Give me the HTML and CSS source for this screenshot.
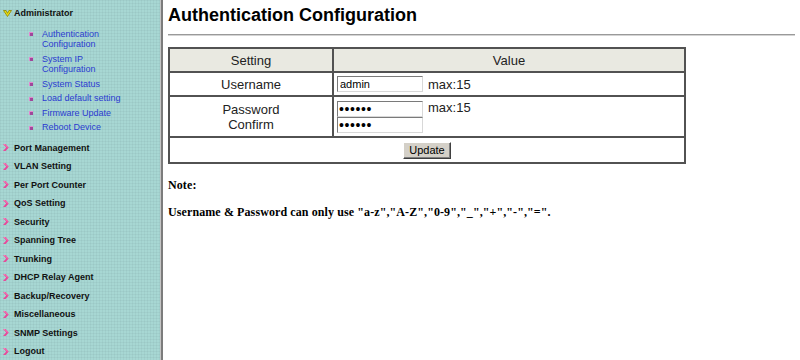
FILE: index.html
```html
<!DOCTYPE html>
<html>
<head>
<meta charset="utf-8">
<title>Authentication Configuration</title>
<link rel="stylesheet" href="styles.css">
</head>
<body>
<div class="layout">
  <nav class="sidebar">
    <div class="main-item open">
      <svg class="ico-open" width="9" height="7" viewBox="0 0 9 7"><path d="M0.5 0.5h2.6l1.4 2.8 1.4-2.8h2.6l-4 6z" fill="#ecdf10" stroke="#8c8400" stroke-width="0.8" stroke-linejoin="round"/></svg>
      <span>Administrator</span>
    </div>
    <ul class="sub">
      <li><span class="bullet"></span><span class="link">Authentication<br>Configuration</span></li>
      <li><span class="bullet"></span><span class="link">System IP<br>Configuration</span></li>
      <li><span class="bullet"></span><span class="link">System Status</span></li>
      <li><span class="bullet"></span><span class="link">Load default setting</span></li>
      <li><span class="bullet"></span><span class="link">Firmware Update</span></li>
      <li><span class="bullet"></span><span class="link">Reboot Device</span></li>
    </ul>
    <div class="main-item"><svg class="ico-arrow" width="6" height="7" viewBox="0 0 6 7"><path d="M0 0h2.6l3.2 3.5-3.2 3.5H0l3.2-3.5z" fill="#e8489a"/><path d="M0.6 0.6h1.6l2.6 2.9" fill="none" stroke="#ff9cc8" stroke-width="0.7"/></svg><span>Port Management</span></div>
    <div class="main-item"><svg class="ico-arrow" width="6" height="7" viewBox="0 0 6 7"><path d="M0 0h2.6l3.2 3.5-3.2 3.5H0l3.2-3.5z" fill="#e8489a"/><path d="M0.6 0.6h1.6l2.6 2.9" fill="none" stroke="#ff9cc8" stroke-width="0.7"/></svg><span>VLAN Setting</span></div>
    <div class="main-item"><svg class="ico-arrow" width="6" height="7" viewBox="0 0 6 7"><path d="M0 0h2.6l3.2 3.5-3.2 3.5H0l3.2-3.5z" fill="#e8489a"/><path d="M0.6 0.6h1.6l2.6 2.9" fill="none" stroke="#ff9cc8" stroke-width="0.7"/></svg><span>Per Port Counter</span></div>
    <div class="main-item"><svg class="ico-arrow" width="6" height="7" viewBox="0 0 6 7"><path d="M0 0h2.6l3.2 3.5-3.2 3.5H0l3.2-3.5z" fill="#e8489a"/><path d="M0.6 0.6h1.6l2.6 2.9" fill="none" stroke="#ff9cc8" stroke-width="0.7"/></svg><span>QoS Setting</span></div>
    <div class="main-item"><svg class="ico-arrow" width="6" height="7" viewBox="0 0 6 7"><path d="M0 0h2.6l3.2 3.5-3.2 3.5H0l3.2-3.5z" fill="#e8489a"/><path d="M0.6 0.6h1.6l2.6 2.9" fill="none" stroke="#ff9cc8" stroke-width="0.7"/></svg><span>Security</span></div>
    <div class="main-item"><svg class="ico-arrow" width="6" height="7" viewBox="0 0 6 7"><path d="M0 0h2.6l3.2 3.5-3.2 3.5H0l3.2-3.5z" fill="#e8489a"/><path d="M0.6 0.6h1.6l2.6 2.9" fill="none" stroke="#ff9cc8" stroke-width="0.7"/></svg><span>Spanning Tree</span></div>
    <div class="main-item"><svg class="ico-arrow" width="6" height="7" viewBox="0 0 6 7"><path d="M0 0h2.6l3.2 3.5-3.2 3.5H0l3.2-3.5z" fill="#e8489a"/><path d="M0.6 0.6h1.6l2.6 2.9" fill="none" stroke="#ff9cc8" stroke-width="0.7"/></svg><span>Trunking</span></div>
    <div class="main-item"><svg class="ico-arrow" width="6" height="7" viewBox="0 0 6 7"><path d="M0 0h2.6l3.2 3.5-3.2 3.5H0l3.2-3.5z" fill="#e8489a"/><path d="M0.6 0.6h1.6l2.6 2.9" fill="none" stroke="#ff9cc8" stroke-width="0.7"/></svg><span>DHCP Relay Agent</span></div>
    <div class="main-item"><svg class="ico-arrow" width="6" height="7" viewBox="0 0 6 7"><path d="M0 0h2.6l3.2 3.5-3.2 3.5H0l3.2-3.5z" fill="#e8489a"/><path d="M0.6 0.6h1.6l2.6 2.9" fill="none" stroke="#ff9cc8" stroke-width="0.7"/></svg><span>Backup/Recovery</span></div>
    <div class="main-item"><svg class="ico-arrow" width="6" height="7" viewBox="0 0 6 7"><path d="M0 0h2.6l3.2 3.5-3.2 3.5H0l3.2-3.5z" fill="#e8489a"/><path d="M0.6 0.6h1.6l2.6 2.9" fill="none" stroke="#ff9cc8" stroke-width="0.7"/></svg><span>Miscellaneous</span></div>
    <div class="main-item"><svg class="ico-arrow" width="6" height="7" viewBox="0 0 6 7"><path d="M0 0h2.6l3.2 3.5-3.2 3.5H0l3.2-3.5z" fill="#e8489a"/><path d="M0.6 0.6h1.6l2.6 2.9" fill="none" stroke="#ff9cc8" stroke-width="0.7"/></svg><span>SNMP Settings</span></div>
    <div class="main-item"><svg class="ico-arrow" width="6" height="7" viewBox="0 0 6 7"><path d="M0 0h2.6l3.2 3.5-3.2 3.5H0l3.2-3.5z" fill="#e8489a"/><path d="M0.6 0.6h1.6l2.6 2.9" fill="none" stroke="#ff9cc8" stroke-width="0.7"/></svg><span>Logout</span></div>
  </nav>
  <main class="content">
    <h1 class="title">Authentication Configuration</h1>
    <hr class="rule">
    <table class="cfg">
      <tr class="head">
        <td class="col1">Setting</td>
        <td class="col2">Value</td>
      </tr>
      <tr class="row-user">
        <td class="col1">Username</td>
        <td class="col2 left"><input class="field" type="text" value="admin"><span class="hint">max:15</span></td>
      </tr>
      <tr class="row-pass">
        <td class="col1">Password<br>Confirm</td>
        <td class="col2 left"><input class="field pw" type="password" value="123456"><span class="hint">max:15</span><br><input class="field pw" type="password" value="123456"></td>
      </tr>
      <tr class="row-btn">
        <td colspan="2" class="center"><button class="btn" type="button">Update</button></td>
      </tr>
    </table>
    <p class="note note-title">Note:</p>
    <p class="note note-body">Username &amp; Password can only use "a-z","A-Z","0-9","_","+","-","=".</p>
  </main>
</div>
</body>
</html>
```

FILE: styles.css
```css
* { box-sizing: border-box; }
html, body { margin: 0; padding: 0; }
body {
  font-family: "Liberation Sans", Arial, sans-serif;
  background: #ffffff;
  color: #000;
}
.layout {
  display: flex;
  height: 360px;
  overflow: hidden;
}
.sidebar {
  width: 163px;
  flex: none;
  height: 360px;
  padding-top: 4px;
  background-color: #a7d7d3;
  background-image:
    linear-gradient(rgba(0,0,0,0.035) 1px, transparent 1px),
    linear-gradient(90deg, rgba(0,0,0,0.035) 1px, transparent 1px);
  background-size: 3px 3px;
  box-shadow: inset -2px 0 0 #7c7c7c, inset -3px 0 0 #c4c4c4;
}
.main-item {
  display: flex;
  align-items: center;
  height: 18.5px;
  padding-left: 3px;
  font-size: 9px;
  font-weight: bold;
  color: #111;
  white-space: nowrap;
}
.ico-arrow { margin-right: 5px; flex: none; }
.ico-open { margin-right: 2px; flex: none; }
.sub {
  list-style: none;
  margin: 6.25px 0 0;
  padding: 0 0 1.5px 29px;
}
.sub li {
  display: flex;
  align-items: flex-start;
  margin-bottom: 4px;
  font-size: 9px;
  line-height: 10.5px;
  color: #2b3bd0;
}
.bullet {
  flex: none;
  width: 4px;
  height: 4px;
  margin-top: 3.5px;
  margin-right: 9px;
  background: #a0479a;
  box-shadow: inset 1px 1px 0 #e08ad0;
}
.link { white-space: nowrap; }

.content {
  flex: 1;
  padding: 5px 5px 0 5px;
}
.title {
  margin: 0;
  font-size: 18px;
  line-height: 21px;
  font-weight: bold;
  color: #000;
}
.rule {
  margin: 8px 0 0;
  height: 0;
  border: 0;
  border-top: 1px solid #9a9a9a;
  border-bottom: 1px solid #d4d4d4;
}
.cfg {
  margin-top: 11px;
  width: 518px;
  border-collapse: collapse;
  font-size: 13px;
  color: #222;
}
.cfg td {
  border: 2px solid #525252;
  padding: 0 3px;
  text-align: center;
  vertical-align: middle;
}
.cfg .col1 { width: 164px; }
.cfg .left { text-align: left; }
.head td { background: #e9e9e1; height: 24px; }
.row-user td { height: 24px; }
.row-pass td { height: 41px; line-height: 15px; }
.row-btn td { height: 26px; }
.field {
  width: 86px;
  height: 16px;
  margin: 0;
  padding: 0 2px;
  font-family: "Liberation Sans", Arial, sans-serif;
  font-size: 11px;
  color: #000;
  border: 1px solid;
  border-color: #7a7a7a #d8d8d8 #d8d8d8 #7a7a7a;
  background: #fff;
  vertical-align: middle;
}
.field.pw {
  font-size: 14px;
  letter-spacing: 0.6px;
  padding: 0 1px;
}
.hint { margin-left: 5px; vertical-align: middle; }
.row-pass .hint { vertical-align: top; }
.btn {
  width: 48px;
  height: 17px;
  padding: 0;
  margin: 0;
  font-family: "Liberation Sans", Arial, sans-serif;
  font-size: 11px;
  color: #000;
  background: #d4d0c8;
  border: 1px solid;
  border-color: #ffffff #404040 #404040 #ffffff;
  box-shadow: inset -1px -1px 0 #808080;
  vertical-align: middle;
}
.note {
  font-family: "Liberation Serif", "Times New Roman", serif;
  font-weight: bold;
  font-size: 12px;
  letter-spacing: 0.1px;
  line-height: 14px;
  color: #000;
  margin: 0;
}
.note-title { margin-top: 14px; }
.note-body { margin-top: 13px; }
```
